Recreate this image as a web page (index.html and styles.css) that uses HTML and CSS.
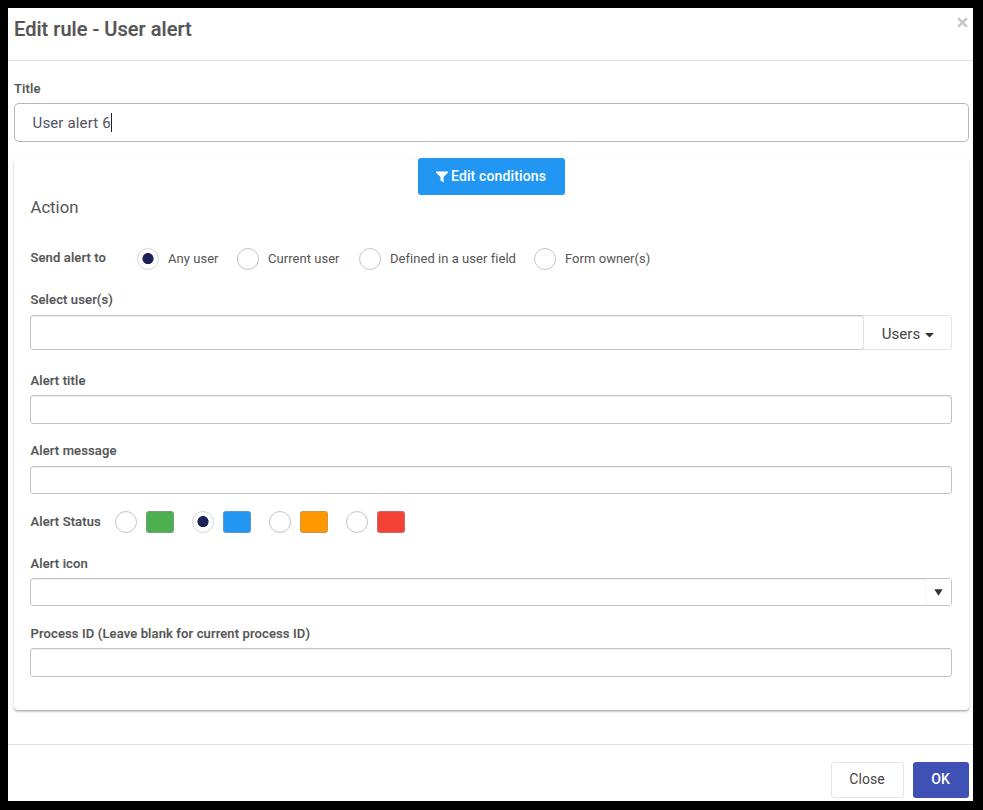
FILE: index.html
```html
<!DOCTYPE html>
<html lang="en">
<head>
<meta charset="utf-8">
<title>Edit rule - User alert</title>
<link rel="stylesheet" href="styles.css">
</head>
<body>
<div class="modal">
  <header class="modal-header">
    <h1><span>Edit rule - User alert</span></h1>
    <button class="close" aria-label="Dismiss"><svg width="11" height="11" viewBox="0 0 11 11"><path d="M2 2l7 7M9 2l-7 7" stroke="#c8c8c8" stroke-width="2.500" stroke-linecap="square"/></svg></button>
  </header>
  <main class="modal-body">
    <div class="label title-label"><span>Title</span></div>
    <div class="title-input"><span>User alert 6</span><i class="caret"></i></div>
    <section class="card">
      <button class="conditions"><svg width="12" height="12" viewBox="0 0 12 12"><path d="M0 .5h12v1L7.600 6v5.500L4.500 9.500V6L0 1.500z" fill="#fff"/></svg><span>Edit conditions</span></button>
      <h2><span>Action</span></h2>
      <div class="send-row">
        <div class="label send-label"><span>Send alert to</span></div>
        <label class="option any"><i class="radio checked"></i><span>Any user</span></label>
        <label class="option current"><i class="radio"></i><span>Current user</span></label>
        <label class="option defined"><i class="radio"></i><span>Defined in a user field</span></label>
        <label class="option"><i class="radio"></i><span>Form owner(s)</span></label>
      </div>
      <div class="label select-label"><span>Select user(s)</span></div>
      <div class="user-group">
        <div class="field"></div>
        <button class="users"><span>Users</span><svg width="9" height="5" viewBox="0 0 9 5"><path d="M0 0h9L4.500 4.500z" fill="#333"/></svg></button>
      </div>
      <div class="label"><span>Alert title</span></div>
      <div class="field"></div>
      <div class="label"><span>Alert message</span></div>
      <div class="field message"></div>
      <div class="status-row">
        <div class="label status-label"><span>Alert Status</span></div>
        <label class="status"><i class="radio"></i><i class="swatch green"></i></label>
        <label class="status"><i class="radio checked"></i><i class="swatch blue"></i></label>
        <label class="status"><i class="radio"></i><i class="swatch orange"></i></label>
        <label class="status"><i class="radio"></i><i class="swatch red"></i></label>
      </div>
      <div class="label icon-label"><span>Alert icon</span></div>
      <div class="field select"><div class="arrow"><svg width="9" height="7" viewBox="0 0 9 7"><path d="M.300.300h8.400L4.500 6.800z" fill="#333"/></svg></div></div>
      <div class="label"><span>Process ID (Leave blank for current process ID)</span></div>
      <div class="field"></div>
    </section>
  </main>
  <footer class="modal-footer">
    <button class="btn cancel"><span>Close</span></button>
    <button class="btn ok"><span>OK</span></button>
  </footer>
</div>
</body>
</html>
```
FILE: styles.css
```css
* { box-sizing: border-box; }
body {
  margin: 0;
  height: 810px;
  padding: 8px 10px 9px 8px;
  background: #000;
  color: #555;
  font-family: Roboto, "Liberation Sans", sans-serif;
  font-size: 13px;
  overflow: hidden;
}
button { font-family: inherit; margin: 0; padding: 0; border: 0; background: none; }
svg { display: block; flex: none; }
.modal { height: 793px; background: #fff; }
.modal-header {
  display: flex;
  justify-content: space-between;
  align-items: flex-start;
  height: 53px;
  padding: 6px 5px 0 6px;
  border-bottom: 1px solid #e0e3e5;
}
h1 { margin: 0; font-size: 20px; line-height: 30px; font-weight: 500; letter-spacing: .04px; -webkit-text-stroke: .2px #555; color: #555; }
.close { padding-top: 3px; }
.modal-body { height: 683px; padding: 19px 4px 0 6px; }
.label {
  height: 16px;
  line-height: 18px;
  font-weight: 500;
  letter-spacing: .13px;
  -webkit-text-stroke: .15px #555;
  white-space: nowrap;
}
.card .label { padding-left: .5px; }
.title-label { margin-bottom: 7px; }
.title-input {
  display: flex;
  align-items: center;
  height: 39px;
  padding-left: 17.5px;
  border: 1px solid #aeb9c4;
  border-radius: 5px;
  font-size: 15px;
  letter-spacing: .15px;
  color: #50525f;
}
.caret { width: 1px; height: 19px; margin-left: .5px; background: #223; }
.card {
  height: 552px;
  margin-top: 16px;
  padding: 0 17px 0 16px;
  border-radius: 4px;
  box-shadow: 0 2px 2px rgba(0,0,0,.14), 0 1px 1px rgba(0,0,0,.14), 0 1px 4px rgba(0,0,0,.1);
}
.conditions {
  display: flex;
  align-items: center;
  justify-content: center;
  gap: 3px;
  width: 147px;
  height: 37px;
  margin: 0 auto;
  border-radius: 3px;
  background: #2196f3;
  color: #fff;
  font-size: 14px;
  letter-spacing: .13px;
  font-weight: 500;
}
.conditions span { padding-bottom: 1px; }
h2 { margin: 2px 0 31px; padding-left: .5px; height: 20px; line-height: 22px; font-size: 16.700px; font-weight: 400; }
.send-row, .status-row { display: flex; align-items: center; height: 22px; }
.card .send-label, .card .status-label { line-height: 16px; }
.send-label { width: 107px; margin-top: -2px; }
.option, .status { display: flex; align-items: center; white-space: nowrap; }
.option { gap: 9px; letter-spacing: .04px; }
.option span { padding-bottom: 2px; }
.any { width: 100px; }
.current { width: 122px; }
.defined { width: 175px; }
.radio {
  display: block;
  flex: none;
  width: 22px;
  height: 22px;
  border: 1px solid #c4c4c4;
  border-radius: 50%;
}
.radio.checked { border-color: #d8d8d8; background: radial-gradient(circle at 50% 48%, #1c2157 5.200px, #fff 5.900px); }
.select-label { margin: 21px 0 8px; }
.user-group { display: flex; height: 35px; margin-bottom: 22px; }
.user-group .field { flex: 1; height: 35px; }
.users {
  display: flex;
  align-items: center;
  justify-content: center;
  gap: 5px;
  width: 89px;
  margin-left: -1px;
  padding: 2px 0 0 1px;
  border: 1px solid #dde6e4;
  border-radius: 0 3px 3px 0;
  color: #444;
  font-size: 15px;
  letter-spacing: .1px;
}
.users svg { margin-top: 4px; }
.field {
  height: 29px;
  border: 1px solid #c4c4c4;
  border-radius: 3px;
  box-shadow: inset 0 1px 1px rgba(0,0,0,.075);
}
.label + .field { margin: 7px 0 18px; }
.label + .field.message { height: 28px; margin: 8px 0 17px; }
.status-label { width: 85px; }
.status { width: 77px; gap: 9px; }
.swatch { width: 28px; height: 22px; border: 1px dotted #999; border-radius: 3px; }
.green { background: #4caf50; }
.blue { background: #2196f3; }
.orange { background: #ff9800; }
.red { background: #f44336; }
.icon-label { margin-top: 22px; }
.label + .field.select { display: flex; justify-content: flex-end; height: 28px; margin-bottom: 19px; }
.arrow { display: flex; width: 26px; padding: 10.400px 0 0 8px; border-left: 1px solid #f5f5f5; background: #fff; }
.modal-footer {
  display: flex;
  justify-content: flex-end;
  gap: 9px;
  height: 57px;
  padding: 17px 4px 0 0;
  border-top: 1px solid #e0e3e5;
}
.btn { height: 36px; padding: 0 1px 2px 0; border-radius: 3px; font-size: 14px; }
.cancel { width: 73px; border: 1px solid #e5e5e5; color: #444; letter-spacing: .1px; }
.ok { width: 56px; background: #3f51b5; color: #fff; font-weight: 500; }
```
